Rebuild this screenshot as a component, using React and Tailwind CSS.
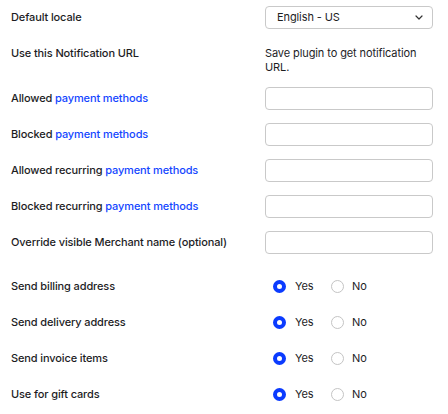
import React from "react";

const font = { fontFamily: "Inter, 'Noto Sans', sans-serif" };

function Label({ children }) {
  return <div className="w-[254px] shrink-0 text-[11px] leading-[14px] font-medium text-[#1d1d1f] tracking-[-0.12px]">{children}</div>;
}

function Link({ children }) {
  return <span className="text-[#1446ff]">{children}</span>;
}

function TextInput() {
  return <div className="w-[168px] h-[23px] rounded-[4px] border border-[#c9c9c9] bg-white" />;
}

function Radio({ checked }) {
  return checked ? (
    <span className="w-[13px] h-[13px] rounded-full border-[4px] border-[#0b3bff] bg-white shrink-0" />
  ) : (
    <span className="w-[13px] h-[13px] rounded-full border border-[#c4c4c4] bg-white shrink-0" />
  );
}

function RadioRow({ label }) {
  return (
    <div className="flex items-center h-[36px]">
      <Label>{label}</Label>
      <div className="flex items-center pl-[8px] text-[11px] text-[#1d1d1f] tracking-[-0.1px]">
        <Radio checked />
        <span className="ml-[9px] w-[36px]">Yes</span>
        <Radio />
        <span className="ml-[8px]">No</span>
      </div>
    </div>
  );
}

function InputRow({ label }) {
  return (
    <div className="flex items-center h-[36px]">
      <Label>{label}</Label>
      <TextInput />
    </div>
  );
}

export default function App() {
  return (
    <div className="w-[448px] h-[414px] bg-white pl-[11px] overflow-hidden" style={font}>
      <div className="flex items-center h-[34px]">
        <Label>Default locale</Label>
        <div className="w-[168px] h-[23px] rounded-[4px] border border-[#c9c9c9] bg-white flex items-center justify-between pl-[11px] pr-[9px] text-[11px] text-[#1d1d1f] tracking-[-0.1px]">
          <span>English - US</span>
          <svg width="8" height="5" viewBox="0 0 8 5" fill="none">
            <path d="M1 1l3 3 3-3" stroke="#333" strokeWidth="1.2" strokeLinecap="round" strokeLinejoin="round" />
          </svg>
        </div>
      </div>
      <div className="flex items-start pt-[12px] h-[40px]">
        <Label>Use this Notification URL</Label>
        <div className="w-[168px] text-[11px] leading-[14px] text-[#1d1d1f] tracking-[-0.1px]">Save plugin to get notification URL.</div>
      </div>
      <div className="mt-[6px]">
        <InputRow label={<>Allowed <Link>payment methods</Link></>} />
        <InputRow label={<>Blocked <Link>payment methods</Link></>} />
        <InputRow label={<>Allowed recurring <Link>payment methods</Link></>} />
        <InputRow label={<>Blocked recurring <Link>payment methods</Link></>} />
        <InputRow label="Override visible Merchant name (optional)" />
      </div>
      <div className="mt-[8px]">
        <RadioRow label="Send billing address" />
        <RadioRow label="Send delivery address" />
        <RadioRow label="Send invoice items" />
        <RadioRow label="Use for gift cards" />
      </div>
    </div>
  );
}
